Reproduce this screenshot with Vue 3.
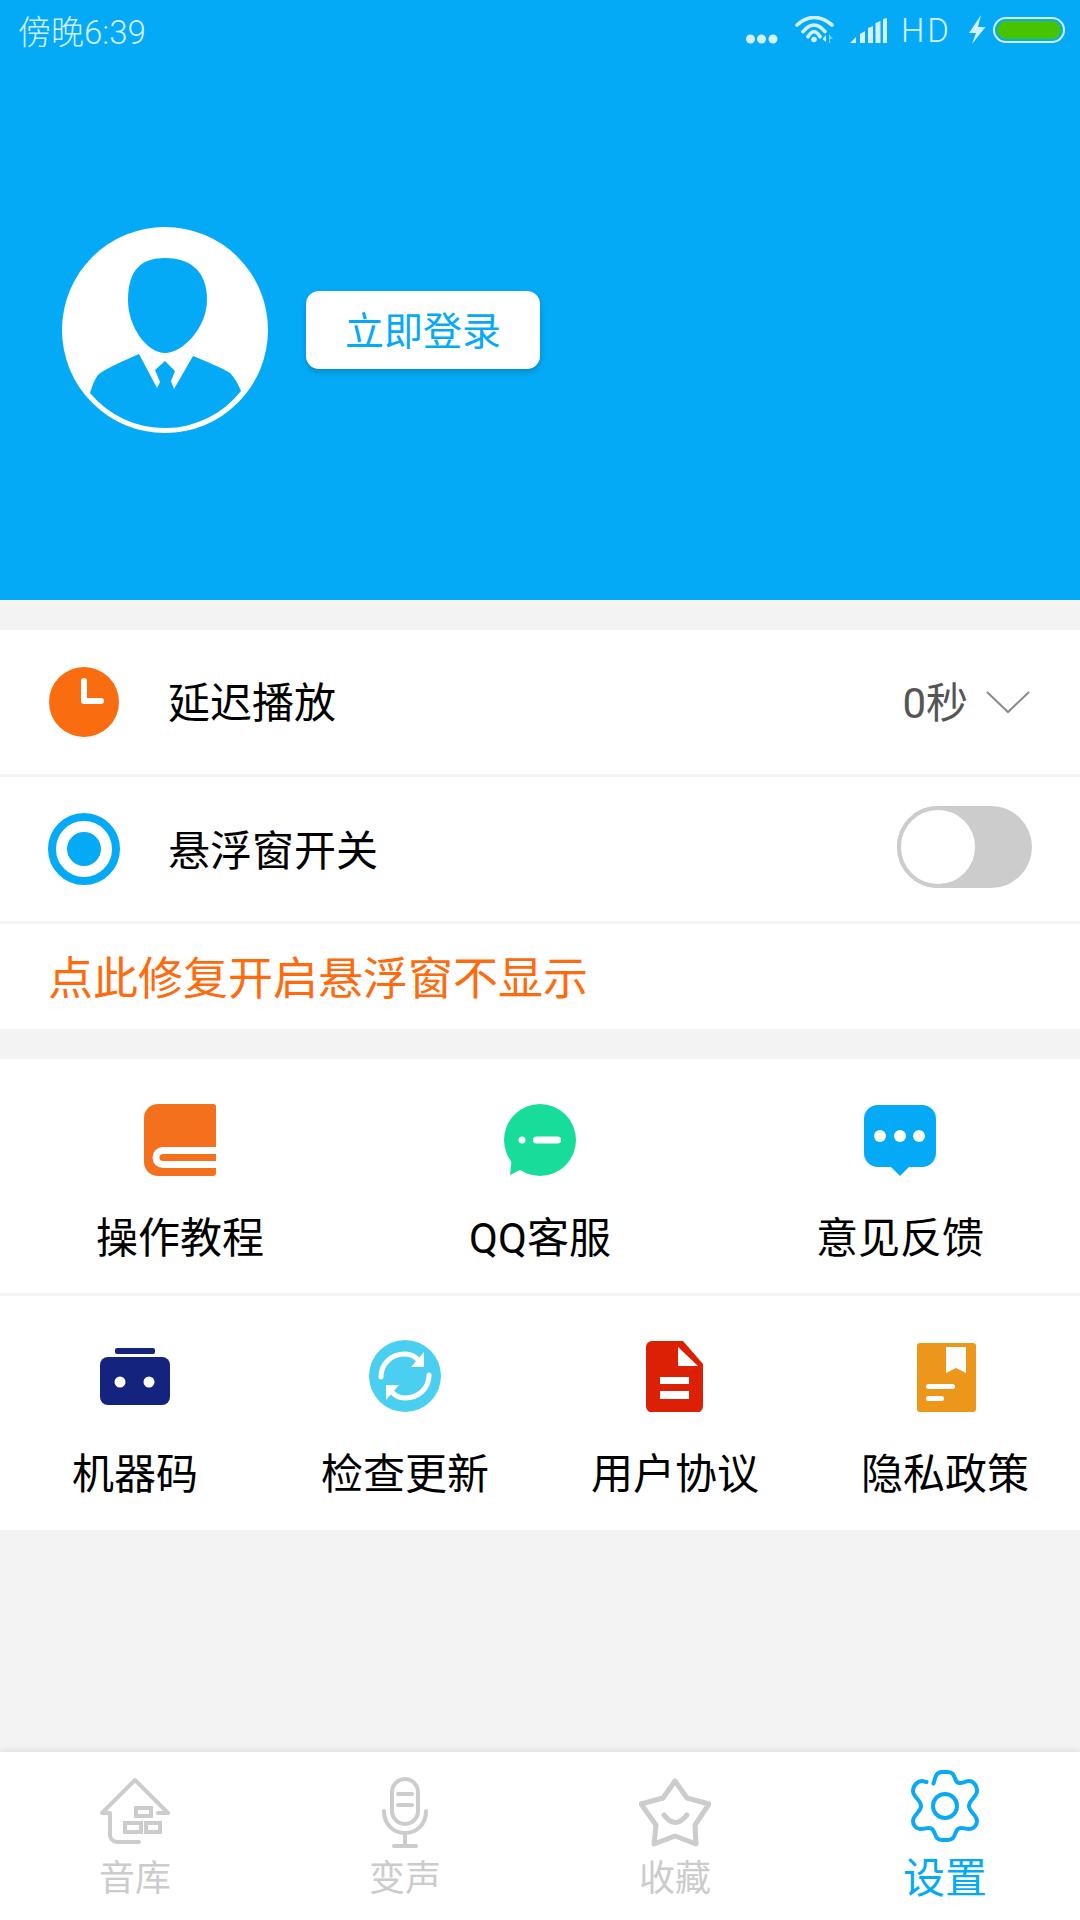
<template>
  <div class="page">
    <header class="header">
      <div class="status-bar">
        <span class="status-time">傍晚6:39</span>
        <div class="status-right">
          <svg class="st-dots" width="32" height="10" viewBox="0 0 32 10">
            <circle cx="4.500" cy="5" r="4.500" /><circle cx="15.500" cy="5" r="4.500" /><circle cx="27" cy="5" r="4.500" />
          </svg>
          <svg class="st-wifi" width="40" height="28" viewBox="0 0 40 28">
            <path d="M2 9 Q19 -6 37 9 M8 15.700 Q19 2.300 30 15.700 M13 20.700 Q19 10.700 25 20.700" fill="none" stroke="#d4f0ff" stroke-width="3.600" stroke-linecap="round" />
            <circle cx="19" cy="23.500" r="2.800" />
            <path d="M31 19 L27.500 23 L31 26 Z" />
            <path d="M34 18 L38 23 H35 V27 H34 Z" opacity="0.55" />
          </svg>
          <svg class="st-signal" width="38" height="26" viewBox="0 0 38 26">
            <path d="M0 26 L6 20 V26 Z M10 26 V17 L15 14 V26 Z M18 26 V11 L23 9 V26 Z M25.500 26 V6 L30.500 4 V26 Z M33 26 V2 L37 1 V26 Z" />
          </svg>
          <span class="st-hd">HD</span>
          <svg class="st-bolt" width="17" height="30" viewBox="0 0 17 30">
            <path d="M12 0 L0 18 H7 L3 29 L16.500 12 H9 Z" />
          </svg>
          <div class="st-battery"><div class="st-battery-fill"></div></div>
        </div>
      </div>

      <div class="hero">
        <svg class="avatar" width="206" height="206" viewBox="0 0 206 206">
          <circle cx="103" cy="103" r="103" fill="#fff" />
          <path d="M103 31 C80 31 66 42 66 73 C66 100 85 126 103 126 C121 126 145 100 145 73 C145 42 126 31 103 31 Z" fill="#05aaf7" />
          <path d="M28 166 C31 157 33 151 37 147 C46 140 62 134 77 127 L95 161 L98 155 L93 143 L103 134 L113 144 L109 154 L112 162 L131 129 C146 135 160 141 168 146 C173 151 176 157 179 164 A97 97 0 0 1 28 166 Z" fill="#05aaf7" />
        </svg>
        <button class="login-btn">立即登录</button>
      </div>
    </header>

    <section class="settings">
      <div class="row row-delay">
        <svg class="row-icon" width="72" height="72" viewBox="0 0 72 72">
          <circle cx="36" cy="36" r="35" fill="#f96c0f" />
          <path d="M36 15 V35 H53" fill="none" stroke="#fff" stroke-width="6" stroke-linecap="round" stroke-linejoin="round" />
        </svg>
        <span class="row-label">延迟播放</span>
        <span class="row-value">0秒</span>
        <svg class="chevron" width="44" height="24" viewBox="0 0 44 24">
          <path d="M1 2 L22 22 L43 2" fill="none" stroke="#8a8a8a" stroke-width="2" />
        </svg>
      </div>

      <div class="row row-float">
        <svg class="row-icon" width="72" height="72" viewBox="0 0 72 72">
          <circle cx="36" cy="36" r="32" fill="none" stroke="#05aaf7" stroke-width="8" />
          <circle cx="36" cy="36" r="17" fill="#05aaf7" />
        </svg>
        <span class="row-label">悬浮窗开关</span>
        <div class="toggle"><div class="toggle-knob"></div></div>
      </div>

      <div class="row row-fix"><span class="fix-text">点此修复开启悬浮窗不显示</span></div>
    </section>

    <section class="grid three">
      <div class="grid-item">
        <svg width="72" height="72" viewBox="0 0 72 72">
          <path d="M14 0 H69 A3 3 0 0 1 72 3 V69 A3 3 0 0 1 69 72 H14 A14 14 0 0 1 0 58 V14 A14 14 0 0 1 14 0 Z" fill="#f5701c" />
          <path d="M72 46.500 H19 A7 7 0 0 0 19 60.500 H72" fill="none" stroke="#fff" stroke-width="7" />
        </svg>
        <span class="grid-label">操作教程</span>
      </div>
      <div class="grid-item">
        <svg width="72" height="72" viewBox="0 0 72 72">
          <circle cx="36" cy="36" r="36" fill="#18dc9a" />
          <path d="M8 52 L6 71 L20 64 Z" fill="#18dc9a" />
          <circle cx="18" cy="36" r="3.500" fill="#fff" />
          <rect x="29" y="32.500" width="28" height="7" rx="3.500" fill="#fff" />
        </svg>
        <span class="grid-label">QQ客服</span>
      </div>
      <div class="grid-item">
        <svg width="72" height="72" viewBox="0 0 72 72">
          <rect x="0" y="1" width="72" height="62" rx="14" fill="#05aaf7" />
          <path d="M26 62 L36 72 L46 62 Z" fill="#05aaf7" />
          <circle cx="16" cy="32" r="6" fill="#fff" />
          <circle cx="36" cy="32" r="6" fill="#fff" />
          <circle cx="55" cy="32" r="6" fill="#fff" />
        </svg>
        <span class="grid-label">意见反馈</span>
      </div>
    </section>

    <section class="grid four">
      <div class="grid-item">
        <svg width="72" height="72" viewBox="0 0 72 72">
          <rect x="16" y="8" width="40" height="6" rx="2" fill="#14237d" />
          <rect x="1" y="17" width="70" height="48" rx="8" fill="#14237d" />
          <circle cx="21" cy="42" r="5.500" fill="#fff" />
          <circle cx="50" cy="42" r="5.500" fill="#fff" />
        </svg>
        <span class="grid-label">机器码</span>
      </div>
      <div class="grid-item">
        <svg width="72" height="72" viewBox="0 0 72 72">
          <circle cx="36" cy="36" r="36" fill="#4bcff0" />
          <path d="M12 37 C12 24 22 14 36 14 C42 14 47 17 50 21" fill="none" stroke="#fff" stroke-width="5" stroke-linecap="round" />
          <path d="M55 12 V27 H42 Z" fill="#fff" />
          <g transform="rotate(180 36 36)">
            <path d="M12 37 C12 24 22 14 36 14 C42 14 47 17 50 21" fill="none" stroke="#fff" stroke-width="5" stroke-linecap="round" />
            <path d="M55 12 V27 H42 Z" fill="#fff" />
          </g>
        </svg>
        <span class="grid-label">检查更新</span>
      </div>
      <div class="grid-item">
        <svg width="72" height="72" viewBox="0 0 72 72">
          <path d="M13 1 H44 L64 24 V66 A7 7 0 0 1 57 73 H14 A7 7 0 0 1 7 66 V7 A6 6 0 0 1 13 1 Z" fill="#db2006" />
          <path d="M39 7 V26 H59 Z" fill="#fff" />
          <rect x="21" y="37" width="29" height="7" fill="#fff" />
          <rect x="21" y="51" width="29" height="8" fill="#fff" />
        </svg>
        <span class="grid-label">用户协议</span>
      </div>
      <div class="grid-item">
        <svg width="72" height="72" viewBox="0 0 72 72">
          <rect x="8" y="3" width="59" height="69" rx="3" fill="#ec971a" />
          <path d="M37 7 H57 V33 L47 28 L37 33 Z" fill="#fff" />
          <rect x="17" y="44" width="29" height="5" rx="2.500" fill="#fff" />
          <rect x="17" y="56" width="18" height="5" rx="2.500" fill="#fff" />
        </svg>
        <span class="grid-label">隐私政策</span>
      </div>
    </section>

    <div class="spacer"></div>

    <nav class="tabbar">
      <div class="tab">
        <svg width="72" height="72" viewBox="0 0 72 72" fill="none" stroke="#ccc" stroke-width="4" stroke-linejoin="round" stroke-linecap="round">
          <path d="M40 66 H18 A7 7 0 0 1 11 59 V37 H3 L36 4 L69 37 H59" />
          <g stroke-linecap="butt" stroke-linejoin="miter">
            <rect x="37" y="32" width="15" height="8" />
            <rect x="26" y="47" width="16" height="9" />
            <rect x="47" y="47" width="14" height="9" />
          </g>
        </svg>
        <span class="tab-label">音库</span>
      </div>
      <div class="tab">
        <svg width="72" height="72" viewBox="0 0 72 72" fill="none" stroke="#ccc" stroke-width="4" stroke-linecap="round">
          <rect x="23" y="3" width="26" height="45" rx="13" />
          <path d="M29 18 H43 M29 29 H43" />
          <path d="M15 35 C15 48 24 57 36 57 C48 57 57 48 57 35" />
          <path d="M36 57 V70 M25 70 H47" />
        </svg>
        <span class="tab-label">变声</span>
      </div>
      <div class="tab">
        <svg width="72" height="72" viewBox="0 0 72 72" fill="none" stroke="#ccc" stroke-width="5" stroke-linejoin="round" stroke-linecap="round">
          <path d="M36 5 L48 22 L70 28 L56 49 L57 68 L36 60 L15 68 L17 49 L2 28 L24 22 Z" />
          <path d="M25 39 Q36 54 48 39" />
        </svg>
        <span class="tab-label">收藏</span>
      </div>
      <div class="tab active">
        <svg width="72" height="72" viewBox="0 0 72 72" fill="none" stroke="#0aa9f5" stroke-width="4" stroke-linecap="round">
          <path d="M24.500 13.500 C26 10 26 2 33 2 H39 C46 2 45 9 48 12 C51 15 56 11 60 11 C64 11 68 15 68 21 C68 27 60 30 60 36 C60 42 68 45 68 51 C68 55 65 59 60 59 C55 59 51 56 48 60 C45 64 46 70 39 70 H33 C26 70 27 64 24 60 C21 56 17 59 12 59 C7 59 4 55 4 51 C4 45 12 42 12 36 C12 30 4 27 4 21 C4 15 9 11 13 11 L17.500 12" />
          <circle cx="36" cy="36" r="12" />
        </svg>
        <span class="tab-label">设置</span>
      </div>
    </nav>
  </div>
</template>

<script setup>
</script>

<style>
html, body {
  margin: 0;
  background: #f3f3f3;
}
</style>

<style scoped>
.page {
  display: flex;
  flex-direction: column;
  width: 1080px;
  height: 1920px;
  overflow: hidden;
  background: #f3f3f3;
  font-family: Roboto, "Noto Sans CJK SC", sans-serif;
  color: #000;
}

.header {
  height: 600px;
  background: #05aaf7;
  flex-shrink: 0;
}

.status-bar {
  display: flex;
  justify-content: space-between;
  align-items: center;
  height: 60px;
  padding: 0 15px 0 18px;
  color: #d4f0ff;
}

.status-time {
  font-size: 33px;
  font-weight: 300;
}

.status-right {
  display: flex;
  align-items: center;
}

.status-right svg {
  fill: #d4f0ff;
}

.st-dots { margin-top: 18px; }
.st-wifi { margin-left: 17px; }
.st-signal { margin-left: 15px; }
.st-bolt { margin-left: 17px; }

.st-hd {
  margin-left: 13px;
  font-size: 33px;
  font-weight: 300;
  letter-spacing: 3px;
  line-height: 36px;
  margin-top: 2px;
}

.st-battery {
  box-sizing: border-box;
  width: 72px;
  height: 26px;
  margin-left: 7px;
  padding: 2px;
  border: 2px solid #d4f0ff;
  border-radius: 13px;
}

.st-battery-fill {
  height: 100%;
  background: #46c400;
  border-radius: 9px;
}

.hero {
  display: flex;
  align-items: center;
  gap: 38px;
  height: 540px;
  padding-left: 62px;
}

.login-btn {
  width: 234px;
  height: 78px;
  padding: 0 0 4px;
  border: none;
  border-radius: 13px;
  background: #fff;
  color: #05aaf7;
  font-family: inherit;
  font-size: 39px;
  box-shadow: 0 3px 6px rgba(0, 0, 0, 0.2);
}

.settings {
  display: flex;
  flex-direction: column;
  gap: 3px;
  margin-top: 30px;
}

.row {
  display: flex;
  align-items: center;
  background: #fff;
  padding: 0 48px;
  font-size: 42px;
}

.row-delay, .row-float {
  height: 144px;
}

.row-label {
  margin-left: 48px;
  margin-bottom: 6px;
  flex: 1;
}

.row-float .row-label {
  margin-bottom: 4px;
}

.row-value {
  color: #555;
  margin-bottom: 6px;
}

.chevron {
  margin-left: 18px;
  margin-right: 2px;
}

.toggle {
  box-sizing: border-box;
  display: flex;
  width: 135px;
  height: 82px;
  margin-top: -4px;
  border-radius: 41px;
  background: #ccc;
}

.toggle-knob {
  box-sizing: border-box;
  width: 82px;
  height: 82px;
  border-radius: 50%;
  border: 4px solid #ccc;
  background: #fff;
}

.row-fix {
  height: 105px;
  color: #ff6a0d;
}

.fix-text {
  font-size: 45px;
  margin-bottom: 3px;
}

.grid {
  display: grid;
  background: #fff;
  height: 234px;
  box-sizing: border-box;
}

.grid.three {
  grid-template-columns: repeat(3, 1fr);
  margin-top: 30px;
  padding-top: 45px;
}

.grid.four {
  grid-template-columns: repeat(4, 1fr);
  margin-top: 3px;
  padding-top: 44px;
}

.grid-item {
  display: flex;
  flex-direction: column;
  align-items: center;
}

.grid-label {
  margin-top: 33px;
  font-size: 42px;
  line-height: 60px;
  white-space: nowrap;
}

.spacer {
  flex: 1;
}

.tabbar {
  display: grid;
  grid-template-columns: repeat(4, 1fr);
  height: 168px;
  flex-shrink: 0;
  background: #fff;
  box-shadow: 0 -2px 6px rgba(0, 0, 0, 0.08);
}

.tab {
  display: flex;
  flex-direction: column;
  align-items: center;
  padding-top: 24px;
}

.tab-label {
  margin-top: 8px;
  font-size: 36px;
  line-height: 46px;
  color: #ccc;
}

.tab.active {
  padding-top: 18px;
}

.tab.active .tab-label {
  margin-top: 14px;
  font-size: 42px;
  color: #05aaf7;
}
</style>
